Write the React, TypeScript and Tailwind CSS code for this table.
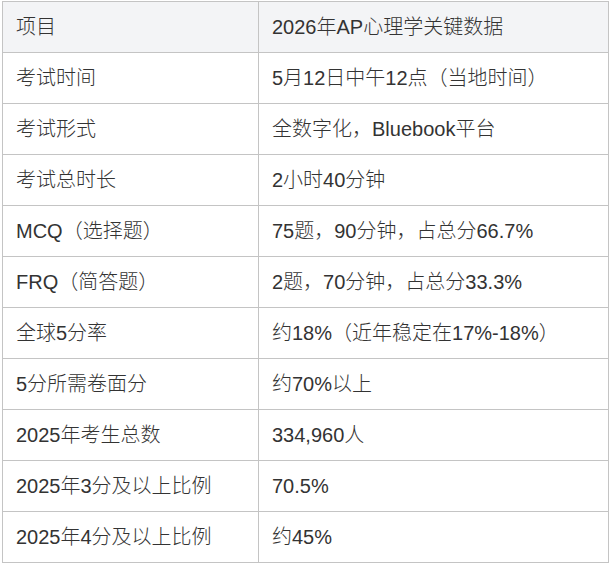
const rows: [string, string][] = [
  ["考试时间", "5月12日中午12点（当地时间）"],
  ["考试形式", "全数字化，Bluebook平台"],
  ["考试总时长", "2小时40分钟"],
  ["MCQ（选择题）", "75题，90分钟，占总分66.7%"],
  ["FRQ（简答题）", "2题，70分钟，占总分33.3%"],
  ["全球5分率", "约18%（近年稳定在17%-18%）"],
  ["5分所需卷面分", "约70%以上"],
  ["2025年考生总数", "334,960人"],
  ["2025年3分及以上比例", "70.5%"],
  ["2025年4分及以上比例", "约45%"],
];

export default function App() {
  return (
    <div className="pl-[2px] pt-[1px] font-['Liberation_Sans','Noto_Sans_CJK_SC',sans-serif] text-[20px] leading-[24px] font-light text-[#333333]">
      <table className="w-[607px] border-collapse">
        <thead>
          <tr className="bg-[#f3f4f6]">
            <th className="h-[51px] w-[256px] border border-[#c4c4c4] px-[13px] text-left font-light">
              项目
            </th>
            <th className="h-[51px] border border-[#c4c4c4] px-[13px] text-left font-light">
              2026年AP心理学关键数据
            </th>
          </tr>
        </thead>
        <tbody>
          {rows.map(([k, v]) => (
            <tr key={k} className="bg-white">
              <td className="h-[51px] border border-[#c4c4c4] px-[13px]">{k}</td>
              <td className="h-[51px] border border-[#c4c4c4] px-[13px]">{v}</td>
            </tr>
          ))}
        </tbody>
      </table>
    </div>
  );
}
